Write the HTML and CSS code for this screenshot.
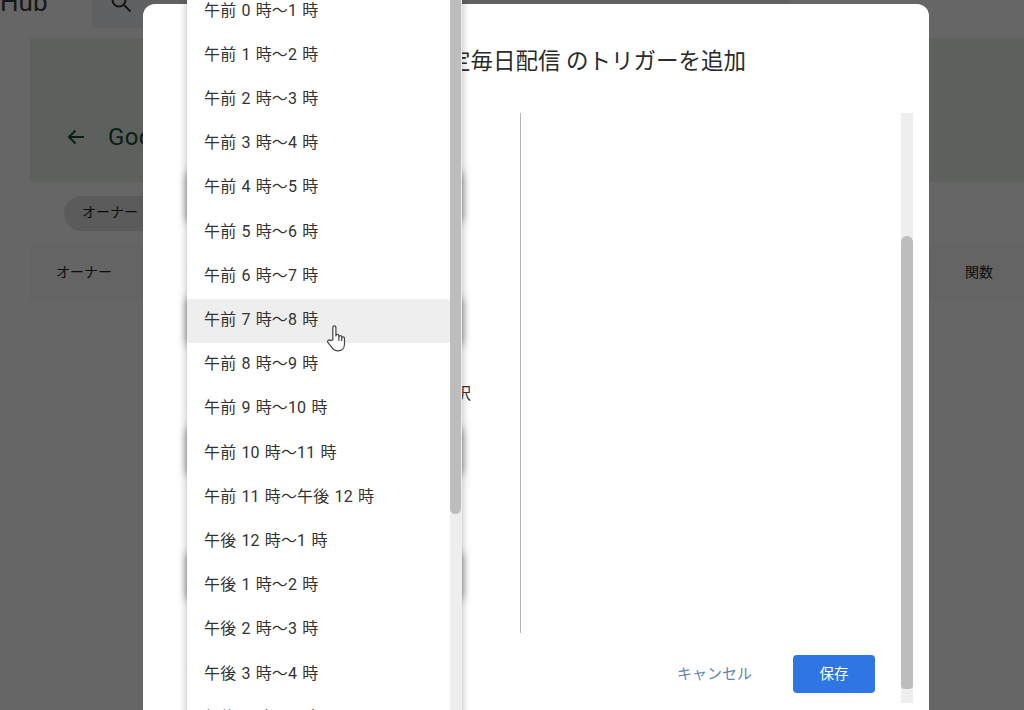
FILE: index.html
```html
<!DOCTYPE html>
<html lang="ja">
<head>
<meta charset="utf-8">
<title>トリガーを追加</title>
<link rel="stylesheet" href="styles.css">
</head>
<body>
<div class="page">
  <header class="topbar">
    <span class="brand">Hub</span>
    <div class="search">
      <svg class="search-icon" viewBox="0 0 24 24" width="24" height="24"><circle cx="10" cy="10" r="6.5"/><path d="M15 15l6.5 6.5"/></svg>
    </div>
  </header>
  <section class="banner">
    <svg class="back" viewBox="0 0 24 24" width="24" height="24"><path d="M20 12H5M11.5 5.5L5 12l6.5 6.5"/></svg>
    <span class="banner-title">Google Apps Script</span>
  </section>
  <div class="filters"><span class="chip">オーナー</span></div>
  <div class="table-head"><span>オーナー</span><span>関数</span></div>

  <div class="overlay"></div>

  <div class="modal">
    <h1 class="modal-title">定毎日配信 のトリガーを追加</h1>
    <div class="modal-body">
      <div class="form-col">
        <div class="field field-a"></div>
        <div class="field field-b"></div>
        <div class="field-label">時刻を選択</div>
        <div class="field field-c"></div>
        <div class="field field-d"></div>
      </div>
      <div class="preview-col">
        <div class="preview"></div>
        <div class="actions">
          <span class="cancel">キャンセル</span>
          <span class="save">保存</span>
        </div>
      </div>
      <div class="track modal-track"><div class="thumb modal-thumb"></div></div>
    </div>

    <div class="dropdown">
      <ul class="options">
        <li>午前 0 時〜1 時</li>
        <li>午前 1 時〜2 時</li>
        <li>午前 2 時〜3 時</li>
        <li>午前 3 時〜4 時</li>
        <li>午前 4 時〜5 時</li>
        <li>午前 5 時〜6 時</li>
        <li>午前 6 時〜7 時</li>
        <li class="is-hover">午前 7 時〜8 時</li>
        <li>午前 8 時〜9 時</li>
        <li>午前 9 時〜10 時</li>
        <li>午前 10 時〜11 時</li>
        <li>午前 11 時〜午後 12 時</li>
        <li>午後 12 時〜1 時</li>
        <li>午後 1 時〜2 時</li>
        <li>午後 2 時〜3 時</li>
        <li>午後 3 時〜4 時</li>
        <li>午後 4 時〜5 時</li>
      </ul>
      <div class="track list-track"><div class="thumb list-thumb"></div></div>
      <svg class="cursor" viewBox="0 0 20 26" width="22" height="28.600">
        <path d="M6.2 14.5V3.2c0-1.9 2.8-1.9 2.8 0v7.6c0-1.7 2.7-1.7 2.7 0v.9c0-1.6 2.6-1.6 2.6 0v1c0-1.5 2.5-1.4 2.5.2v5.6c0 3.6-2.4 6-5.7 6-2.8 0-4.4-1-5.9-3.200L1.700 16.800c-1-1.700 1.100-3.100 2.400-1.700z"/>
        <path class="cursor-line" d="M11.700 11.700v3.600M14.300 12.700v2.800"/>
      </svg>
    </div>
  </div>
</div>
</body>
</html>
```
FILE: styles.css
```css
* { box-sizing: border-box; }
html, body { margin: 0; padding: 0; }
body {
  font-family: Roboto, "Noto Sans CJK JP", sans-serif;
  color: #222;
  background: #fff;
}
.page {
  position: relative;
  width: 1024px;
  height: 710px;
  overflow: hidden;
  background: #fff;
}

/* page beneath the scrim */
.topbar {
  height: 38px;
  display: flex;
  align-items: flex-start;
}
.brand {
  width: 92px;
  height: 14px;
  font-size: 26px;
  line-height: 4px;
  color: #3c4043;
  overflow: hidden;
  display: block;
}
.search {
  width: 698px;
  height: 28px;
  background: #f1f3f4;
  border-radius: 0 0 4px 4px;
  overflow: hidden;
  position: relative;
}
.search-icon {
  position: absolute;
  left: 17px;
  top: -10px;
  fill: none;
  stroke: #333;
  stroke-width: 2;
}
.banner {
  margin-left: 30px;
  height: 144px;
  background: #e8f1e8;
  display: flex;
  align-items: center;
  padding: 54px 0 0 34px;
  gap: 20px;
}
.back { fill: none; stroke: #14532d; stroke-width: 2; }
.banner-title { font-size: 24px; color: #14532d; letter-spacing: .4px; }
.filters { padding: 14px 0 12px 64px; }
.chip {
  display: flex;
  align-items: center;
  width: 160px;
  height: 35px;
  padding: 0 0 5px 18px;
  border-radius: 18px;
  background: #e3e3e3;
  font-size: 14px;
}
.table-head {
  margin-left: 30px;
  height: 59px;
  display: flex;
  align-items: center;
  justify-content: space-between;
  padding: 0 31px 4px 26px;
  background: #fbfbfb;
  font-size: 14px;
}
.overlay {
  position: absolute;
  inset: 0;
  background: rgba(0, 0, 0, .6);
}

/* dialog */
.modal {
  position: absolute;
  left: 143px;
  top: 4px;
  width: 786px;
  height: 760px;
  background: #fff;
  border-radius: 12px;
}
.modal-title {
  margin: 0;
  height: 109px;
  padding: 44px 0 0 305px;
  font-size: 22.500px;
  font-weight: 400;
  line-height: 26px;
  color: #2b2b2b;
  white-space: nowrap;
}
.modal-body {
  display: flex;
  padding: 0 16px 0 44px;
}
.form-col {
  width: 275px;
  padding-top: 59px;
  display: flex;
  flex-direction: column;
}
.field {
  height: 47px;
  border-radius: 4px;
  box-shadow: 0 0 8px rgba(0, 0, 0, .5);
  flex: none;
}
.field-a { height: 50px; }
.field-b { margin-top: 76px; }
.field-label {
  margin-top: 38px;
  width: 284px;
  flex: none;
  text-align: right;
  font-size: 16px;
  line-height: 22px;
  color: #333;
}
.field-c { margin-top: 23px; }
.field-d { margin-top: 78px; }
.preview-col {
  width: 381px;
  margin-left: 58px;
}
.preview {
  height: 520px;
  border-left: 1px solid #b4b4b4;
}
.actions {
  display: flex;
  justify-content: flex-end;
  align-items: center;
  gap: 41px;
  margin-top: 22px;
  padding-right: 26px;
}
.cancel { font-size: 15px; color: #5f86b0; padding-bottom: 4px; }
.save {
  width: 82px;
  height: 38px;
  display: flex;
  align-items: center;
  justify-content: center;
  padding-bottom: 4px;
  border-radius: 4px;
  background: #2f76e4;
  color: #fff;
  font-size: 14.500px;
}

/* scrollbars */
.track { width: 12px; background: #eee; flex: none; }
.thumb { background: #bdbdbd; }
.modal-track { height: 590px; }
.modal-thumb { margin-top: 123px; height: 453px; border-radius: 6px 6px 4px 4px; }

/* open dropdown */
.dropdown {
  position: absolute;
  left: 44px;
  top: -4px;
  width: 275px;
  height: 720px;
  display: flex;
  background: #fff;
  box-shadow: 0 0 8px rgba(0, 0, 0, .3);
}
.options {
  list-style: none;
  margin: -10.400px 0 0;
  padding: 0;
  width: 263px;
}
.options li {
  height: 44.200px;
  display: flex;
  align-items: center;
  padding: 0 0 6px 17px;
  font-size: 16px;
  word-spacing: 1px;
  letter-spacing: .15px;
  color: #333;
  white-space: pre;
}
.options .is-hover { background: #eee; border-radius: 2px; }
.list-track { height: 100%; }
.list-thumb { width: 11px; height: 514px; border-radius: 0 0 6px 6px; }
.cursor {
  position: absolute;
  left: 139px;
  top: 324px;
  fill: #fff;
  stroke: #444;
  stroke-width: 1.100;
  stroke-linejoin: round;
}
.cursor-line { fill: none; }
```
